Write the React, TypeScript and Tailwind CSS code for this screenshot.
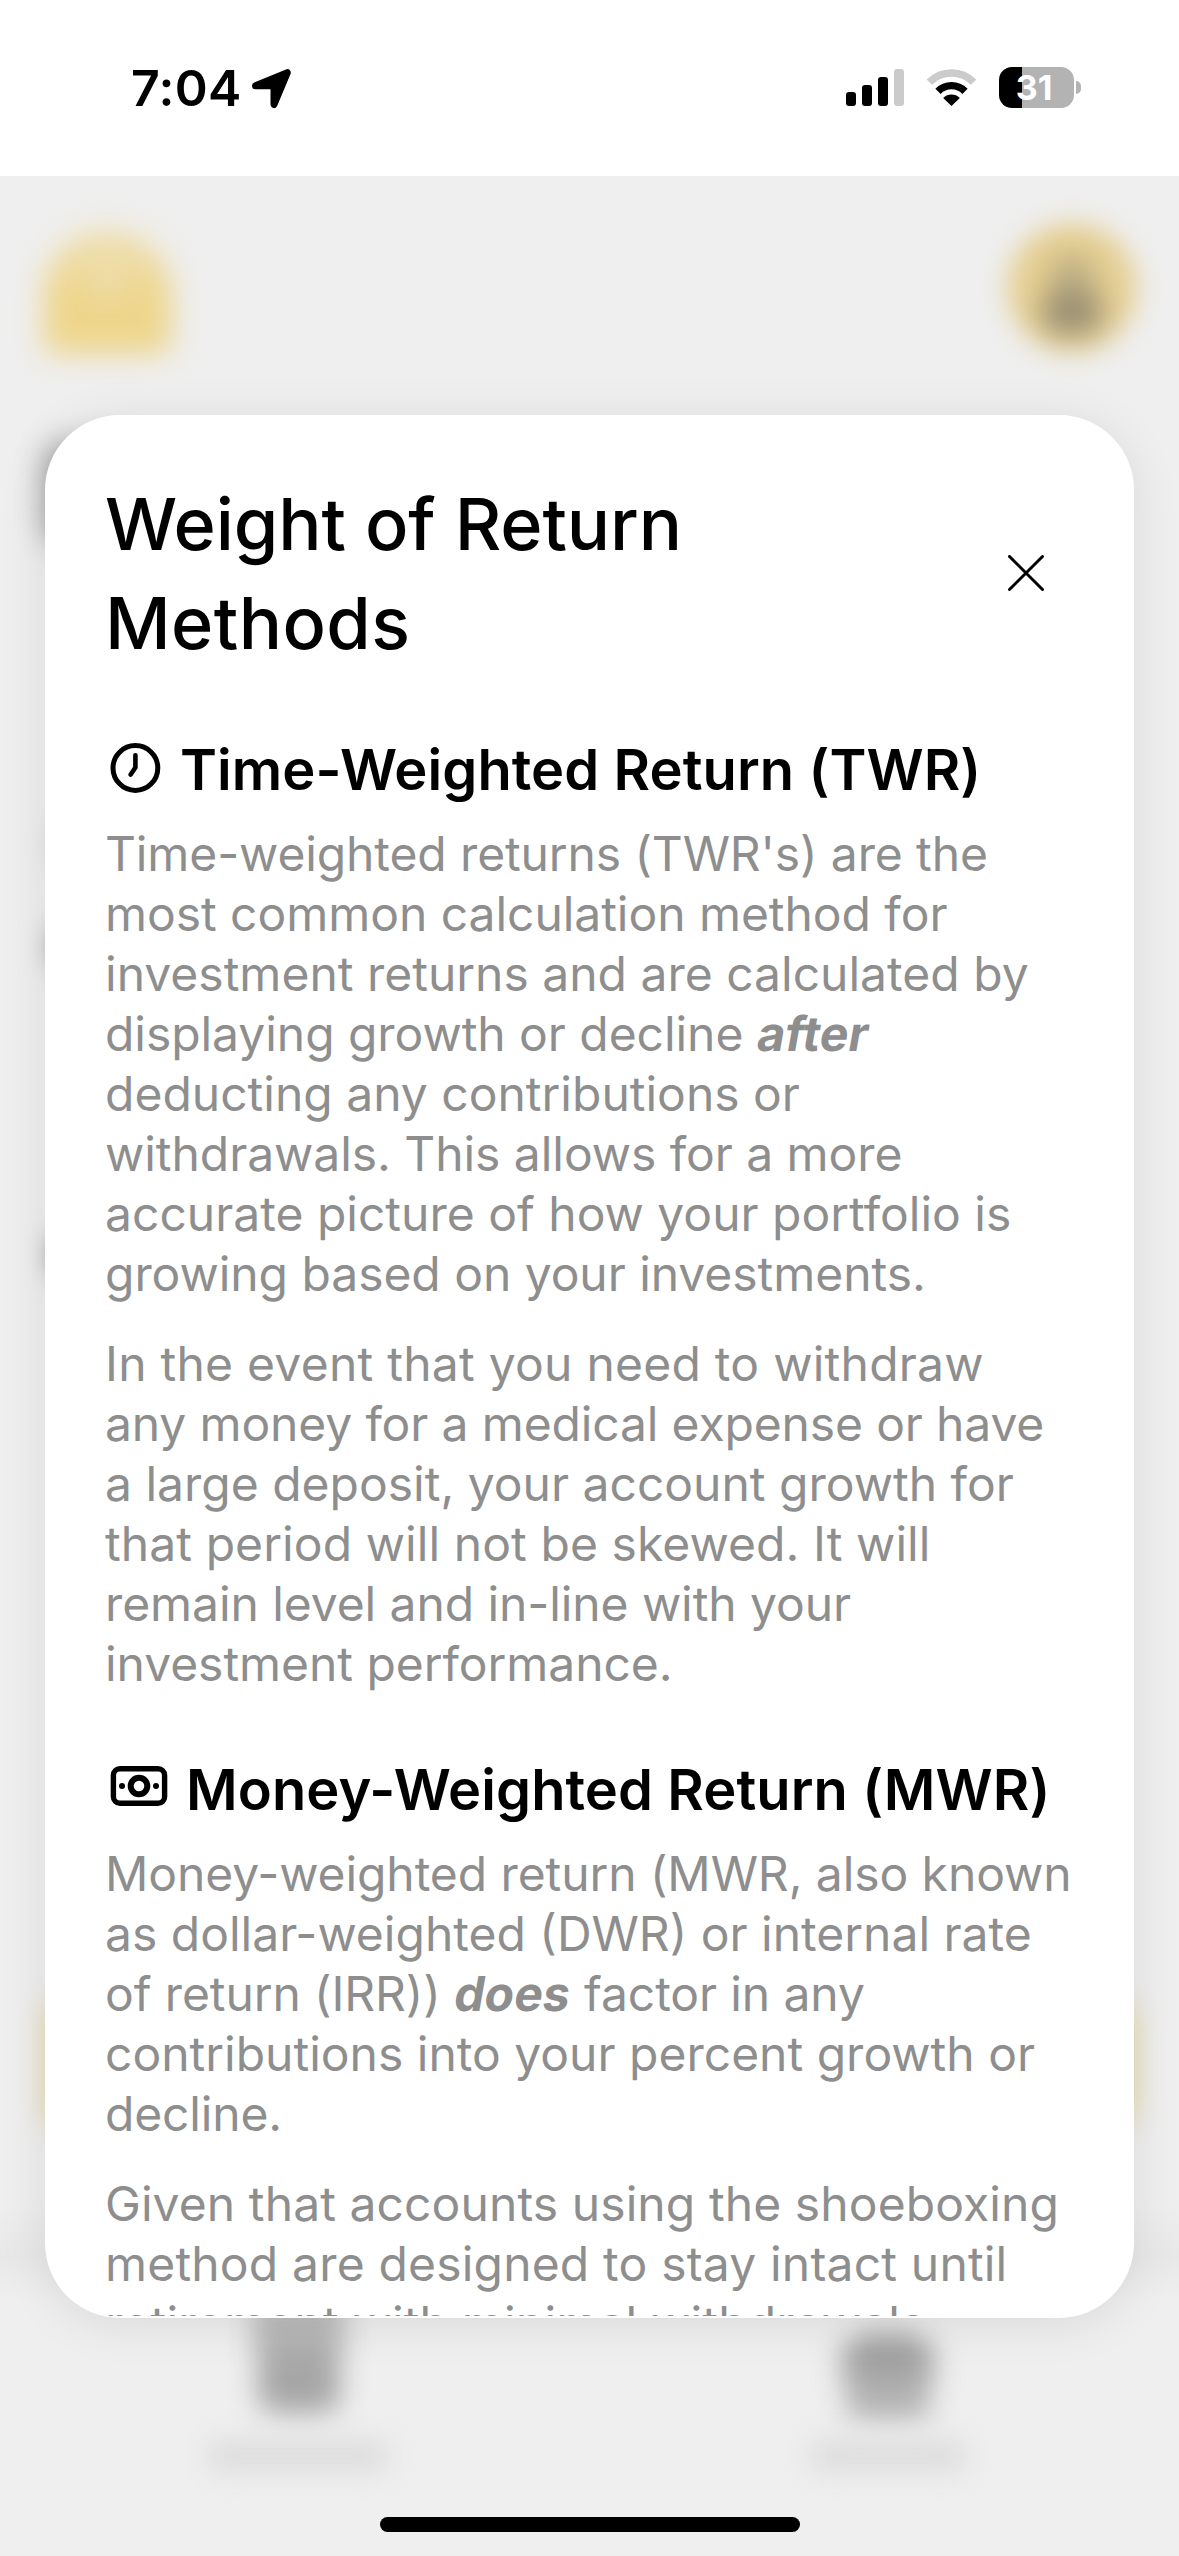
import type { ReactNode } from "react";

function StatusBar() {
  return (
    <header className="flex h-[176px] shrink-0 items-start justify-between bg-white pt-[57px] pr-[98px] pl-[131px]">
      <div className="flex items-center gap-[5px]">
        <span className="w-[115px] text-[50px] leading-[62px] font-semibold tracking-[0.3px]">7:04</span>
        <svg className="size-[41px]" viewBox="0 0 41 41">
          <path d="M4.500 17.800 36.300 4.700 23 36.500V17.800Z" stroke="#000" strokeWidth="7" strokeLinejoin="round" />
        </svg>
      </div>
      <div className="flex items-center gap-[22px] pt-[10px]">
        <svg className="h-[37px] w-[58px]" viewBox="0 0 58 37">
          <rect x="0" y="23" width="10" height="14" rx="3" />
          <rect x="16" y="16" width="10" height="21" rx="3" />
          <rect x="32" y="8" width="10" height="29" rx="3" />
          <rect x="48" y="0" width="10" height="37" rx="3" fill="#cbcbcb" />
        </svg>
        <svg className="h-[37px] w-[51px]" viewBox="0 0 51 37" fill="none">
          <path d="M3.400 13.200A31 31 0 0 1 47.600 13.200" stroke="#cbcbcb" strokeWidth="7.600" />
          <path d="M12 22.300A19 19 0 0 1 39 22.300" stroke="#000" strokeWidth="7.400" />
          <path d="M25.500 37 17.200 28.900A11.800 11.800 0 0 1 33.800 28.900Z" fill="#000" />
        </svg>
        <div className="flex items-center gap-[2px]">
          <div className="flex h-[41px] w-[75px] items-center justify-center rounded-[13px] bg-[linear-gradient(90deg,#000_23px,#b3b3b3_23px)] pr-[5px] text-[34px] leading-[41px] font-bold text-white">
            31
          </div>
          <div className="h-[13px] w-[5px] rounded-r-full bg-[#b3b3b3]" />
        </div>
      </div>
    </header>
  );
}

/* Blurred screen that stays visible around the dialog */
function Backdrop() {
  return (
    <div className="absolute inset-0 flex flex-col pt-[223px]">
      <div className="flex h-[131px] items-end justify-between pr-[42px] pl-[44px]">
        <div className="flex h-[124px] w-[127px] justify-center rounded-t-[62px] rounded-b-[10px] bg-[linear-gradient(180deg,#eedfb0,#eed58a_50%)] pt-[34px] blur-[15px]">
          <div className="h-[30px] w-[44px] rounded-full bg-[#efdfb4] blur-[8px]" />
        </div>
        <div className="flex size-[130px] flex-col items-center self-start rounded-full bg-[#e6cf92] pt-[30px] blur-[13px]">
          <div className="h-[46px] w-[44px] rounded-full bg-[#bcae84] blur-[8px]" />
          <div className="-mt-[10px] h-[46px] w-[62px] rounded-full bg-[#978d72] blur-[8px]" />
        </div>
      </div>
      <div className="mt-[90px] ml-[45px] h-[100px] w-[80px] rounded-[20px] bg-[#999] blur-[15px]" />
      <div className="mt-[286px] ml-[52px] h-[28px] w-[60px] bg-[#ccc] blur-[12px]" />
      <div className="mt-[70px] ml-[50px] h-[38px] w-[60px] bg-[#a4a4a4] blur-[12px]" />
      <div className="mt-[270px] ml-[50px] h-[38px] w-[60px] bg-[#999] blur-[12px]" />
      <div className="mx-[42px] mt-[727px] h-[126px] shrink-0 rounded-[20px] bg-[#eadbb0] blur-[13px]" />
      <div className="mt-[74px] h-[100px] shrink-0 bg-[linear-gradient(180deg,transparent,#e8e8e8_55%,transparent)]" />
      <div className="grid shrink-0 grid-cols-2">
        <div className="flex h-[172px] flex-col items-center justify-between">
          <div className="ml-[8px] flex h-[112px] w-[94px] flex-col items-center blur-[14px]">
            <div className="h-[50px] w-[92px] bg-[#b8b8b8]" />
            <div className="h-[62px] w-[82px] rounded-b-[18px] bg-[#a6a6a6]" />
          </div>
          <div className="ml-[6px] h-[34px] w-[180px] rounded-[10px] bg-[#dedede] blur-[13px]" />
        </div>
        <div className="flex h-[172px] flex-col items-center justify-between pl-[8px]">
          <div className="mt-[32px] flex h-[86px] w-[94px] flex-col items-center blur-[14px]">
            <div className="h-[44px] w-[94px] rounded-t-[30px] bg-[#a0a0a0]" />
            <div className="h-[42px] w-[84px] rounded-b-[14px] bg-[#b2b2b2]" />
          </div>
          <div className="h-[34px] w-[156px] rounded-[10px] bg-[#dedede] blur-[13px]" />
        </div>
      </div>
    </div>
  );
}

function ClockIcon() {
  return (
    <svg className="mt-[8px] size-[60px]" viewBox="0 0 60 60" fill="none" stroke="#000" strokeWidth="5">
      <circle cx="30.400" cy="30" r="22.400" />
      <path d="M30.400 17.200V29.500L25.700 36.600" strokeWidth="4.600" strokeLinecap="round" strokeLinejoin="round" />
    </svg>
  );
}

function CashIcon() {
  return (
    <svg className="mt-[6px] h-[60px] w-[66px]" viewBox="0 0 66 60" fill="none" stroke="#000" strokeWidth="5.400">
      <rect x="8.400" y="12.700" width="51.200" height="34.600" rx="6.500" />
      <circle cx="34" cy="30" r="8.300" strokeWidth="6" />
      <circle cx="17" cy="30" r="3" fill="#000" stroke="none" />
      <circle cx="51" cy="30" r="3" fill="#000" stroke="none" />
    </svg>
  );
}

function SectionTitle({ icon, children }: { icon: ReactNode; children: ReactNode }) {
  return (
    <h2 className="flex h-[80px] gap-[15px] text-[56px] leading-[80px] font-semibold tracking-[0.1px] whitespace-nowrap">
      {icon}
      <span>{children}</span>
    </h2>
  );
}

function Section({ icon, title, children }: { icon: ReactNode; title: string; children: ReactNode }) {
  return (
    <section className="flex flex-col gap-[14px]">
      <SectionTitle icon={icon}>{title}</SectionTitle>
      <div className="flex flex-col gap-[30px] text-[48px] leading-[60px] whitespace-nowrap text-[#8e8e8e]">{children}</div>
    </section>
  );
}

function Emphasis({ children }: { children: ReactNode }) {
  return <strong className="inline-block -skew-x-[10deg] pl-[1px] font-bold tracking-[0.1px]">{children}</strong>;
}

export default function App() {
  return (
    <div className="relative h-[2556px] w-[1179px] overflow-hidden bg-[#efefef] font-[Inter,sans-serif] text-black">
      <Backdrop />
      <div className="relative flex h-full flex-col justify-between pb-[24px]">
        <StatusBar />
        <main className="mx-[45px] mt-[40px] h-[1903px] shrink-0 rounded-[75px] bg-white pb-[2px] shadow-[0_6px_50px_rgba(0,0,0,0.09)]">
          <div className="flex h-[1901px] flex-col overflow-hidden px-[60px] pt-[59px]">
            <div className="mb-[58px] flex items-center justify-between pr-[30px]">
              <h1 className="text-[72px] leading-[99px] font-medium whitespace-nowrap">
                <span className="tracking-[-0.1px]">Weight of Return</span><br />
                <span className="tracking-[0.4px]">Methods</span>
              </h1>
              <button aria-label="Close">
                <svg className="size-[36px]" viewBox="0 0 36 36" stroke="#000" strokeWidth="3" strokeLinecap="round">
                  <path d="M1.500 1.500 34.500 34.500M34.500 1.500 1.500 34.500" />
                </svg>
              </button>
            </div>
            <div className="flex flex-col gap-[56px]">
              <Section icon={<ClockIcon />} title="Time-Weighted Return (TWR)">
                <p>
                  <span className="tracking-[-0.12px]">Time-weighted returns (TWR's) are the</span><br />
                  <span className="tracking-[-0.05px]">most common calculation method for</span><br />
                  investment returns and are calculated by<br />
                  <span className="tracking-[-0.05px]">displaying growth or decline</span> <Emphasis>after</Emphasis><br />
                  deducting any contributions or<br />
                  <span className="tracking-[-0.05px]">withdrawals. This allows for a more</span><br />
                  accurate picture of how your portfolio is<br />
                  <span className="tracking-[-0.05px]">growing based on your investments.</span>
                </p>
                <p>
                  <span className="tracking-[0.25px]">In the event that you need to withdraw</span><br />
                  <span className="tracking-[-0.14px]">any money for a medical expense or have</span><br />
                  a large deposit, your account growth for<br />
                  <span className="tracking-[0.08px]">that period will not be skewed. It will</span><br />
                  <span className="tracking-[-0.08px]">remain level and in-line with your</span><br />
                  <span className="tracking-[-0.05px]">investment performance.</span>
                </p>
              </Section>
              <Section icon={<CashIcon />} title="Money-Weighted Return (MWR)">
                <p>
                  <span className="tracking-[-0.08px]">Money-weighted return (MWR, also known</span><br />
                  as dollar-weighted (DWR) or internal rate<br />
                  <span className="tracking-[-0.1px]">of return (IRR)) <Emphasis>does</Emphasis> factor in any</span><br />
                  contributions into your percent growth or<br />
                  <span className="tracking-[-0.15px]">decline.</span>
                </p>
                <p>
                  <span className="tracking-[0.09px]">Given that accounts using the shoeboxing</span><br />
                  <span className="tracking-[0.18px]">method are designed to stay intact until</span><br />
                  <span className="tracking-[0.18px]">retirement with minimal withdrawals,</span>
                </p>
              </Section>
            </div>
          </div>
        </main>
        <div className="flex h-[15px] shrink-0 justify-center">
          <div className="w-[420px] rounded-full bg-black" />
        </div>
      </div>
    </div>
  );
}
